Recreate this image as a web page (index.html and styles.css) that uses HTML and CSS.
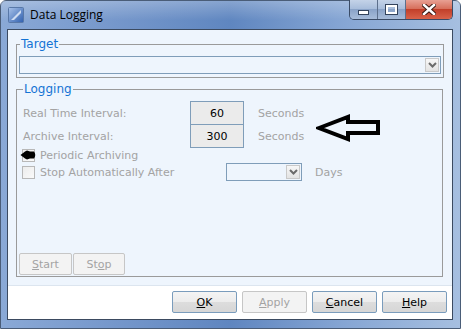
FILE: index.html
```html
<!DOCTYPE html>
<html>
<head>
  <title>Data Logging</title>
  <link rel="stylesheet" href="styles.css">
</head>
<body>
  <div class="window">
    <div class="titlebar">
      <svg class="app-icon" width="16" height="16" viewBox="0 0 16 16">
        <defs>
          <linearGradient id="ig" x1="0" y1="0" x2="1" y2="1">
            <stop offset="0" stop-color="#a9c3ea"/>
            <stop offset="1" stop-color="#2f5fae"/>
          </linearGradient>
        </defs>
        <rect x="0.5" y="0.5" width="15" height="15" rx="1" fill="url(#ig)" stroke="#5878a8"/>
        <path d="M3 13 L13 3 L13 6 L6 13 Z" fill="#e8f0fb" opacity="0.8"/>
      </svg>
      <span class="title">Data Logging</span>
      <div class="caption-buttons">
        <div class="cap cap-min"><span class="min-glyph"></span></div>
        <div class="cap cap-max"><span class="max-glyph"></span></div>
        <div class="cap cap-close">
          <svg width="14" height="11" viewBox="0 0 14 11">
            <path d="M2 1 L12 10 M12 1 L2 10" stroke="#3b1a14" stroke-width="4.5" stroke-linecap="square"/>
            <path d="M2 1 L12 10 M12 1 L2 10" stroke="#ffffff" stroke-width="2.5" stroke-linecap="square"/>
          </svg>
        </div>
      </div>
    </div>

    <div class="client">
      <div class="panel">
        <fieldset class="group target">
          <legend>Target</legend>
          <div class="select select-wide"><span class="select-btn"><svg width="9" height="6" viewBox="0 0 9 6"><path d="M1 1 L4.5 4.5 L8 1" fill="none" stroke="#6b6b6b" stroke-width="2"/></svg></span></div>
        </fieldset>

        <fieldset class="group logging">
          <legend>Logging</legend>
          <div class="field-row">
            <span class="label">Real Time Interval:</span>
            <div class="num">60</div>
            <span class="unit">Seconds</span>
          </div>
          <div class="field-row second">
            <span class="label">Archive Interval:</span>
            <div class="num">300</div>
            <span class="unit">Seconds</span>
          </div>
          <div class="check-row periodic">
            <span class="checkbox"></span>
            <span class="check-label">Periodic Archiving</span>
            <svg class="blob" width="17" height="10" viewBox="0 0 17 10">
              <path d="M0.5 5 L5 1.5 L7 0.5 L10 1.5 L14 1.5 Q16.5 5 14 8.5 L10 8.5 L7 9.5 L5 8.5 Z" fill="#000"/>
            </svg>
          </div>
          <div class="check-row stop">
            <div class="check-cell">
              <span class="checkbox"></span>
              <span class="check-label">Stop Automatically After</span>
            </div>
            <div class="select select-days"><span class="select-btn"><svg width="9" height="6" viewBox="0 0 9 6"><path d="M1 1 L4.5 4.5 L8 1" fill="none" stroke="#6b6b6b" stroke-width="2"/></svg></span></div>
            <span class="unit days">Days</span>
          </div>
          <div class="run-buttons">
            <button class="btn btn-start" disabled><u>S</u>tart</button>
            <button class="btn btn-stop" disabled>St<u>o</u>p</button>
          </div>
          <svg class="big-arrow" width="66" height="28" viewBox="0 0 66 28">
            <path d="M3 14 L32 3 L32 8 L62 8 L62 19 L32 19 L32 25 Z" fill="none" stroke="#000" stroke-width="4" stroke-linejoin="miter"/>
          </svg>
        </fieldset>
      </div>

      <div class="footer">
        <button class="btn btn-main"><u>O</u>K</button>
        <button class="btn btn-main" disabled><u>A</u>pply</button>
        <button class="btn btn-main"><u>C</u>ancel</button>
        <button class="btn btn-main"><u>H</u>elp</button>
      </div>
    </div>
  </div>
</body>
</html>
```

FILE: styles.css
```css
body {
  margin: 0;
  background: #ffffff;
  font-family: "DejaVu Sans", Verdana, sans-serif;
}
.window {
  width: 461px;
  height: 329px;
  box-sizing: border-box;
  display: flex;
  flex-direction: column;
  background: linear-gradient(90deg, #8aa9d6 0%, #7597cb 25%, #5f86c0 50%, #86a6d4 75%, #a6bfe0 100%);
  border: 1px solid #4a5d78;
  border-radius: 6px 6px 0 0;
  position: relative;
}
.titlebar {
  height: 28px;
  display: flex;
  align-items: flex-start;
  padding-left: 7px;
  background: linear-gradient(180deg, rgba(255,255,255,0.25), rgba(255,255,255,0) 70%);
}
.app-icon {
  margin-top: 6px;
}
.title {
  margin-left: 6px;
  margin-top: 6px;
  font-family: "Open Sans", "Noto Sans", sans-serif;
  font-size: 12px;
  line-height: 16px;
  color: #000;
}
.caption-buttons {
  margin-left: auto;
  margin-right: 7px;
  display: flex;
  height: 19px;
  border: 1px solid #3a4b66;
  border-top: none;
  border-radius: 0 0 5px 5px;
  overflow: hidden;
  margin-top: -1px;
}
.cap {
  display: flex;
  align-items: center;
  justify-content: center;
}
.cap-min, .cap-max {
  width: 27px;
  background: linear-gradient(180deg, #c4d3e8 0%, #a9bedc 45%, #8aa3c8 50%, #a7bcda 100%);
  border-right: 1px solid #5c6f8c;
}
.cap-close {
  width: 46px;
  background: linear-gradient(180deg, #e8a093 0%, #d7705c 45%, #c2402a 50%, #d9624a 100%);
}
.min-glyph {
  width: 9px;
  height: 3px;
  margin-top: 6px;
  background: #fff;
  border: 1px solid #33435c;
}
.max-glyph {
  width: 7px;
  height: 5px;
  border: 2px solid #fff;
  outline: 1px solid #33435c;
}
.client {
  flex: 1;
  margin: 0 7px 8px 6px;
  border: 1px solid #3b4a60;
  display: flex;
  flex-direction: column;
  background: #ffffff;
}
.panel {
  flex: 1;
  background: #eef5fd;
  padding: 7px 9px 0 8px;
  border-bottom: 1px solid #dce5ef;
}
.group {
  margin: 0;
  border: 1px solid #9a9a9a;
  padding: 5px 2px 3px 2px;
  position: relative;
}
.group legend {
  padding: 0 1px;
  margin-left: 1px;
  font-size: 12px;
  line-height: 14px;
  color: #1473d4;
}
.logging {
  margin-top: 4px;
  padding: 5px 2px 3px 5px;
  height: 195px;
  box-sizing: border-box;
}
.select {
  height: 18px;
  box-sizing: border-box;
  border: 1px solid #7f9db9;
  background: #eef5fd;
  display: flex;
  justify-content: flex-end;
  align-items: center;
  padding-right: 1px;
}
.select-wide {
  width: 422px;
}
.select-btn {
  width: 14px;
  height: 14px;
  box-sizing: border-box;
  border: 1px solid #c9c9c9;
  background: linear-gradient(180deg, #f7f7f7, #e3e3e3);
  display: flex;
  align-items: center;
  justify-content: center;
}
.field-row {
  display: flex;
  align-items: center;
  height: 24px;
  font-size: 11px;
}
.field-row.second {
  margin-top: -1px;
}
.label {
  width: 167px;
  padding-left: 1px;
  color: #a3a3a3;
}
.num {
  width: 54px;
  height: 24px;
  box-sizing: border-box;
  border: 1px solid #7f9db9;
  background: #ebebeb;
  color: #000;
  font-size: 11px;
  display: flex;
  align-items: center;
  justify-content: center;
}
.unit {
  margin-left: 14px;
  color: #a3a3a3;
  font-size: 11px;
}
.check-row {
  display: flex;
  align-items: center;
  font-size: 11px;
  color: #a3a3a3;
  position: relative;
}
.check-row.periodic {
  height: 15px;
  align-items: flex-start;
}
.check-row.periodic .checkbox {
  margin-top: 1px;
}
.check-row.periodic .check-label {
  line-height: 15px;
}
.check-row.stop {
  height: 18px;
}
.check-cell {
  width: 204px;
  display: flex;
  align-items: center;
}
.checkbox {
  width: 13px;
  height: 13px;
  box-sizing: border-box;
  border: 1px solid #b8b8b8;
  background: linear-gradient(135deg, #ececec, #fafafa);
}
.check-label {
  margin-left: 5px;
}
.select-days {
  width: 76px;
}
.days {
  margin-left: 13px;
}
.blob {
  position: absolute;
  left: -2px;
  top: 2px;
}
.run-buttons {
  display: flex;
  gap: 1px;
  margin-top: 72px;
  margin-left: -3px;
}
.btn {
  height: 22px;
  box-sizing: border-box;
  border: 1px solid #7a9cbc;
  border-radius: 2px;
  background: linear-gradient(180deg, #f4f4f4 0%, #ececec 50%, #dddddd 51%, #d6d6d6 100%);
  font-family: "DejaVu Sans", Verdana, sans-serif;
  font-size: 11px;
  color: #000;
  padding: 0;
}
.btn:disabled {
  border-color: #c6c6c6;
  background: #f3f3f3;
  color: #a3a3a3;
}
.btn-start {
  width: 53px;
}
.btn-stop {
  width: 52px;
}
.footer {
  height: 33px;
  box-sizing: border-box;
  display: flex;
  justify-content: flex-end;
  gap: 5px;
  padding: 5px 5px 0 0;
  background: #ffffff;
}
.btn-main {
  width: 65px;
}
.big-arrow {
  position: absolute;
  left: 299px;
  top: 18px;
}
```
